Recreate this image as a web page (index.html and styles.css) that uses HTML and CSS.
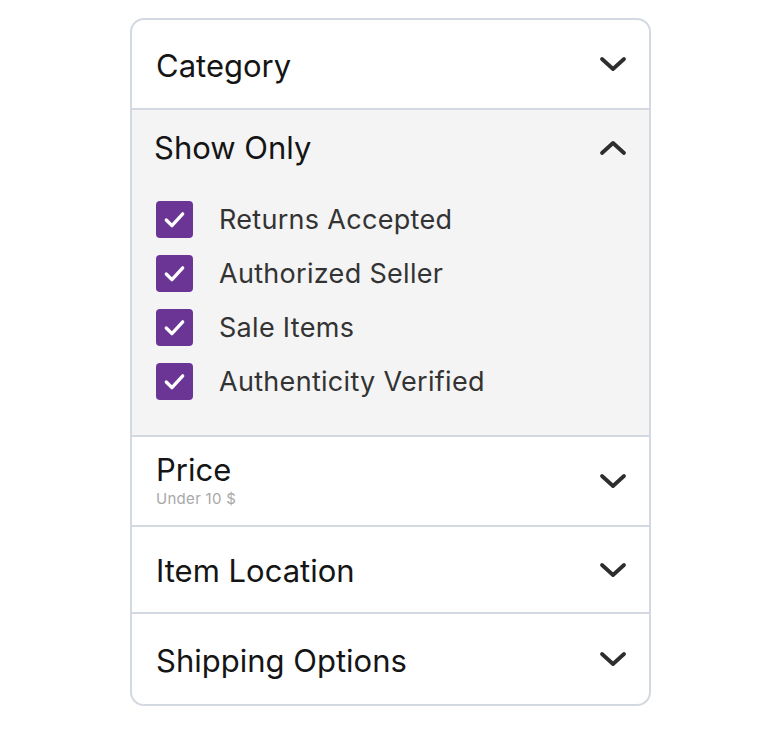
FILE: index.html
```html
<!DOCTYPE html>
<html lang="en">
<head>
    <meta charset="UTF-8">
    <meta name="viewport" content="width=device-width, initial-scale=1.0">
    <title>Filters</title>
    <link rel="stylesheet" href="styles.css">
</head>
<body>
    <section class="filters">
        <div class="filter">
            <div class="filter-header">
                <h3>Category</h3>
                <svg class="chevron" viewBox="0 0 28 16"><path d="M3 3 L14 13 L25 3"/></svg>
            </div>
        </div>

        <div class="filter open">
            <div class="filter-header">
                <h3>Show Only</h3>
                <svg class="chevron" viewBox="0 0 28 16"><path d="M3 13 L14 3 L25 13"/></svg>
            </div>
            <ul class="options">
                <li><span class="box"><svg viewBox="0 0 36 36"><path d="M10 18.5 L15.5 24 L26 12.5"/></svg></span>Returns Accepted</li>
                <li><span class="box"><svg viewBox="0 0 36 36"><path d="M10 18.5 L15.5 24 L26 12.5"/></svg></span>Authorized Seller</li>
                <li><span class="box"><svg viewBox="0 0 36 36"><path d="M10 18.5 L15.5 24 L26 12.5"/></svg></span>Sale Items</li>
                <li><span class="box"><svg viewBox="0 0 36 36"><path d="M10 18.5 L15.5 24 L26 12.5"/></svg></span>Authenticity Verified</li>
            </ul>
        </div>

        <div class="filter price">
            <div class="filter-header">
                <div class="price-text">
                    <h3>Price</h3>
                    <p class="sub">Under 10 $</p>
                </div>
                <svg class="chevron" viewBox="0 0 28 16"><path d="M3 3 L14 13 L25 3"/></svg>
            </div>
        </div>

        <div class="filter location">
            <div class="filter-header">
                <h3>Item Location</h3>
                <svg class="chevron" viewBox="0 0 28 16"><path d="M3 3 L14 13 L25 3"/></svg>
            </div>
        </div>

        <div class="filter shipping">
            <div class="filter-header">
                <h3>Shipping Options</h3>
                <svg class="chevron" viewBox="0 0 28 16"><path d="M3 3 L14 13 L25 3"/></svg>
            </div>
        </div>
    </section>
</body>
</html>
```

FILE: styles.css
```css
body {
    margin: 0;
    padding: 18px 0 0;
    background: #ffffff;
    font-family: Inter, "Noto Sans", sans-serif;
}
.filters {
    width: 517px;
    margin: 0 0 0 130px;
    border: 2px solid #d3d9e0;
    border-radius: 14px;
    overflow: hidden;
}
.filter {
    border-top: 2px solid #d3d9e0;
}
.filter:first-child {
    border-top: none;
}
.filter-header {
    display: flex;
    align-items: center;
    justify-content: space-between;
    height: 88px;
    padding: 0 22px 0 24px;
}
.filter h3 {
    margin: 0;
    padding-top: 4px;
    font-size: 31px;
    line-height: 1.2;
    font-weight: 400;
    letter-spacing: 0;
    color: #151515;
}
.chevron {
    width: 28px;
    height: 16px;
    fill: none;
    stroke: #2e2e2e;
    stroke-width: 3.8;
    stroke-linecap: round;
    stroke-linejoin: round;
}
.open {
    background: #f4f4f4;
}
.open .filter-header {
    height: 76px;
    padding-left: 22px;
}
.open h3 {
    padding-top: 0;
}
.options {
    list-style: none;
    margin: 0;
    padding: 6px 0 27px 24px;
}
.options li {
    display: flex;
    align-items: center;
    height: 54px;
    font-size: 27px;
    color: #333333;
    letter-spacing: 0.3px;
}
.box {
    width: 37px;
    height: 37px;
    margin-right: 26px;
    border-radius: 4px;
    background: #6b3596;
    display: flex;
}
.box svg {
    width: 37px;
    height: 37px;
    fill: none;
    stroke: #ffffff;
    stroke-width: 3.2;
    stroke-linecap: round;
    stroke-linejoin: round;
}
.price-text {
    margin-top: -3px;
}
.price h3 {
    padding-top: 0;
}
.sub {
    margin: 1px 0 0;
    font-size: 15px;
    color: #a8a8a8;
    letter-spacing: 0.3px;
}
.location .filter-header {
    height: 85px;
}
.location h3 {
    padding-top: 2px;
}
.shipping .filter-header {
    height: 90px;
}
```
